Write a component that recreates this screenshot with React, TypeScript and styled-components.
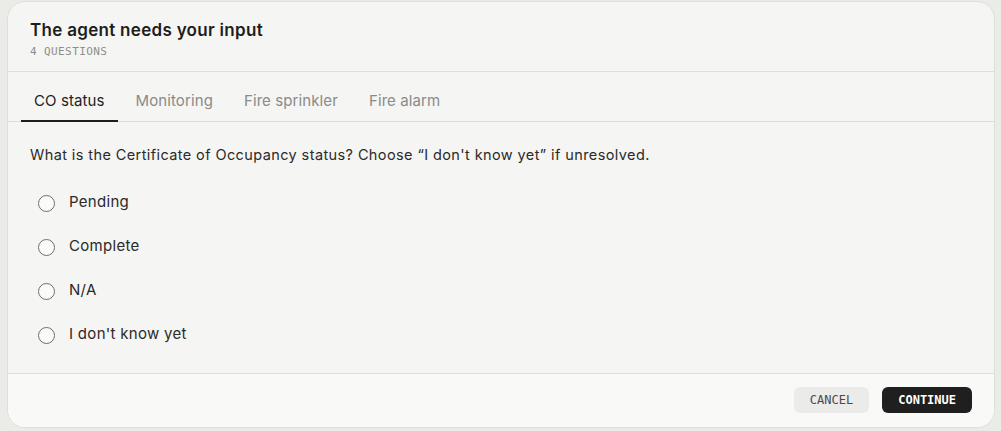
import { useState } from "react";
import styled, { createGlobalStyle } from "styled-components";

const GlobalStyle = createGlobalStyle`
    html, body {
        margin: 0;
        background: #ebebe8;
    }
    body {
        font-family: Inter, "Noto Sans", sans-serif;
        color: #222;
    }
`;

const Page = styled.div`
    padding: 1px 6px 3px 7px;
`;

const Card = styled.div`
    height: 427px;
    box-sizing: border-box;
    display: flex;
    flex-direction: column;
    background: #f5f5f3;
    border: 1px solid #dededb;
    border-radius: 18px;
    overflow: hidden;
`;

const Header = styled.header`
    height: 70px;
    box-sizing: border-box;
    padding: 18px 22px 0;
    border-bottom: 1px solid #dededb;
`;

const Title = styled.h1`
    margin: 0;
    font-size: 17px;
    font-weight: 600;
    line-height: 21px;
    color: #1d1d1d;
    letter-spacing: 0.3px;
`;

const Subtitle = styled.div`
    margin-top: 4px;
    font-family: "DejaVu Sans Mono", monospace;
    font-size: 11px;
    letter-spacing: 0.4px;
    color: #8e8e8c;
`;

const Tabs = styled.nav`
    display: flex;
    gap: 5px;
    height: 50px;
    box-sizing: border-box;
    padding: 0 13px;
    border-bottom: 1px solid #dededb;
`;

const Tab = styled.button<{ $active?: boolean }>`
    all: unset;
    cursor: pointer;
    display: flex;
    align-items: center;
    padding: 9px 13px 0;
    margin-bottom: -1px;
    font-family: Inter, "Noto Sans", sans-serif;
    font-size: 15px;
    letter-spacing: 0.1px;
    color: ${(p) => (p.$active ? "#222" : "#8a8a88")};
    border-bottom: 2px solid ${(p) => (p.$active ? "#1d1d1d" : "transparent")};
`;

const Body = styled.section`
    flex: 1;
    padding: 24px 22px 0;
`;

const Question = styled.p`
    margin: 0 0 24px;
    font-size: 14.5px;
    letter-spacing: 0.4px;
    line-height: 18px;
    color: #2a2a2a;
`;

const Options = styled.div`
    display: flex;
    flex-direction: column;
    gap: 18px;
    padding-left: 8px;
`;

const Option = styled.label`
    display: flex;
    align-items: center;
    gap: 14px;
    height: 26px;
    font-size: 15px;
    letter-spacing: 0.3px;
    color: #2a2a2a;
    cursor: pointer;
`;

const Radio = styled.span<{ $checked?: boolean }>`
    flex: none;
    width: 17px;
    height: 17px;
    margin-top: 4px;
    box-sizing: border-box;
    border-radius: 50%;
    border: 1.2px solid #6e6e6c;
    background: #fafaf9;
    display: flex;
    align-items: center;
    justify-content: center;
    &::after {
        content: "";
        width: 8px;
        height: 8px;
        border-radius: 50%;
        background: ${(p) => (p.$checked ? "#222" : "transparent")};
    }
`;

const Footer = styled.footer`
    height: 54px;
    box-sizing: border-box;
    display: flex;
    align-items: center;
    justify-content: flex-end;
    gap: 13px;
    padding: 0 22px 1px;
    background: #f9f9f8;
    border-top: 1px solid #dededb;
`;

const Button = styled.button<{ $primary?: boolean }>`
    height: 26px;
    padding: 0 16px;
    border: none;
    border-radius: 6px;
    font-family: "DejaVu Sans Mono", monospace;
    font-size: 12px;
    font-weight: ${(p) => (p.$primary ? 700 : 400)};
    cursor: pointer;
    background: ${(p) => (p.$primary ? "#1f1f1f" : "#ebebe9")};
    color: ${(p) => (p.$primary ? "#fff" : "#4a4a48")};
`;

const tabs = ["CO status", "Monitoring", "Fire sprinkler", "Fire alarm"];
const options = ["Pending", "Complete", "N/A", "I don't know yet"];

export default function App() {
    const [tab, setTab] = useState(0);
    const [choice, setChoice] = useState<number | null>(null);

    return (
        <Page>
            <GlobalStyle />
            <Card>
                <Header>
                    <Title>The agent needs your input</Title>
                    <Subtitle>4 QUESTIONS</Subtitle>
                </Header>
                <Tabs>
                    {tabs.map((t, i) => (
                        <Tab key={t} $active={i === tab} onClick={() => setTab(i)}>
                            {t}
                        </Tab>
                    ))}
                </Tabs>
                <Body>
                    <Question>
                        What is the Certificate of Occupancy status? Choose “I don't know yet” if unresolved.
                    </Question>
                    <Options>
                        {options.map((o, i) => (
                            <Option key={o} onClick={() => setChoice(i)}>
                                <Radio $checked={choice === i} />
                                {o}
                            </Option>
                        ))}
                    </Options>
                </Body>
                <Footer>
                    <Button>CANCEL</Button>
                    <Button $primary>CONTINUE</Button>
                </Footer>
            </Card>
        </Page>
    );
}
